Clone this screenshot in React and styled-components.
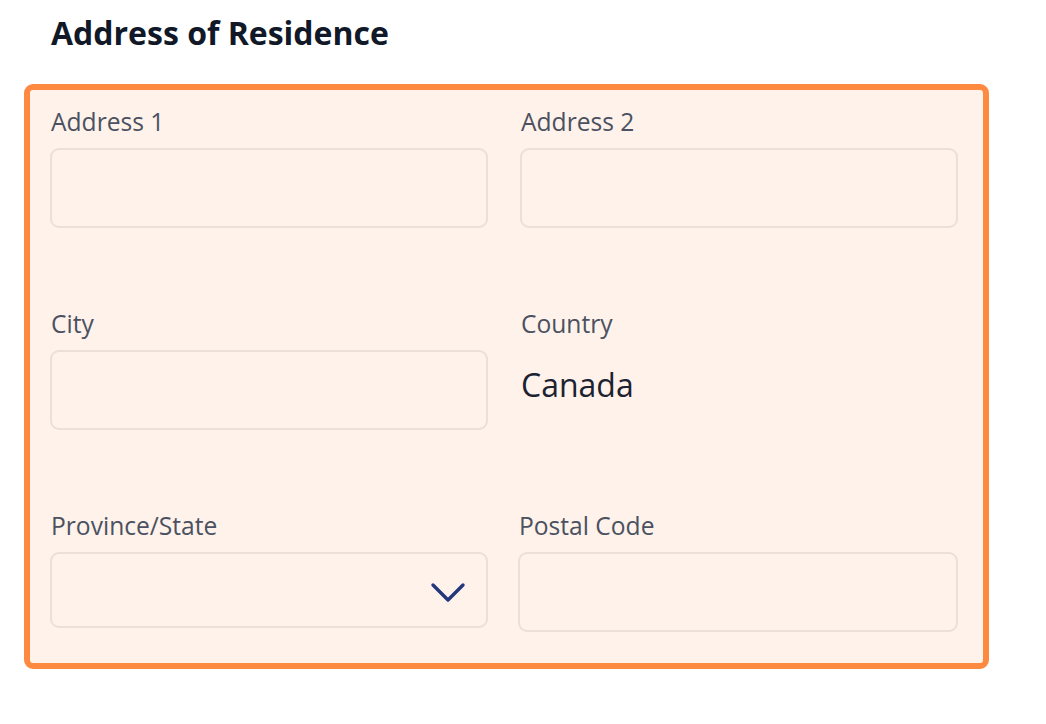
import React from 'react'
import styled, { createGlobalStyle } from 'styled-components'

const GlobalStyle = createGlobalStyle`
  body {
    margin: 0;
    background: #fff;
    font-family: "Open Sans", "Noto Sans", sans-serif;
  }
`

const Page = styled.div`
  padding: 13px 0 0 24px;
  width: 965px;
`

const Title = styled.h2`
  margin: 0 0 31px 27px;
  font-size: 32px;
  line-height: 40px;
  font-weight: 700;
  color: #111827;
`

const Panel = styled.div`
  border: 6px solid #fe8a42;
  border-radius: 9px;
  background: #fef2eb;
  padding: 17px 24px 31px 20px;
  display: grid;
  grid-template-columns: 438px 438px;
  column-gap: 32px;
  row-gap: 81px;
`

const Field = styled.div`
  display: flex;
  flex-direction: column;
  margin-left: ${p => p.$shift || 0}px;
`

const Label = styled.label`
  font-size: 24.6px;
  line-height: 30px;
  color: #4b5160;
  margin: 0 0 11px 1px;
`

const Input = styled.input`
  box-sizing: border-box;
  width: 100%;
  height: 80px;
  border: 2px solid #ebdfd7;
  border-radius: 9px;
  background: transparent;
  font: inherit;
  font-size: 22px;
  padding: 0 16px;
  outline: none;
`

const SelectBox = styled.div`
  box-sizing: border-box;
  width: 100%;
  height: 76px;
  border: 2px solid #ebdfd7;
  border-radius: 9px;
  display: flex;
  align-items: center;
  justify-content: flex-end;
  padding: 6px 20px 0 0;
`

const Value = styled.div`
  font-size: 32px;
  line-height: 70px;
  color: #1c2230;
  margin-left: 1px;
`

const Chevron = () => (
  <svg width="36" height="22" viewBox="0 0 36 22" fill="none">
    <path d="M3 3 L18 18 L33 3" stroke="#24367c" strokeWidth="3.4" strokeLinecap="round" strokeLinejoin="round" />
  </svg>
)

export default function App() {
  return (
    <>
      <GlobalStyle />
      <Page>
        <Title>Address of Residence</Title>
        <Panel>
          <Field>
            <Label>Address 1</Label>
            <Input />
          </Field>
          <Field>
            <Label>Address 2</Label>
            <Input />
          </Field>
          <Field>
            <Label>City</Label>
            <Input />
          </Field>
          <Field>
            <Label>Country</Label>
            <Value>Canada</Value>
          </Field>
          <Field>
            <Label>Province/State</Label>
            <SelectBox>
              <Chevron />
            </SelectBox>
          </Field>
          <Field $shift={-2}>
            <Label>Postal Code</Label>
            <Input />
          </Field>
        </Panel>
      </Page>
    </>
  )
}
